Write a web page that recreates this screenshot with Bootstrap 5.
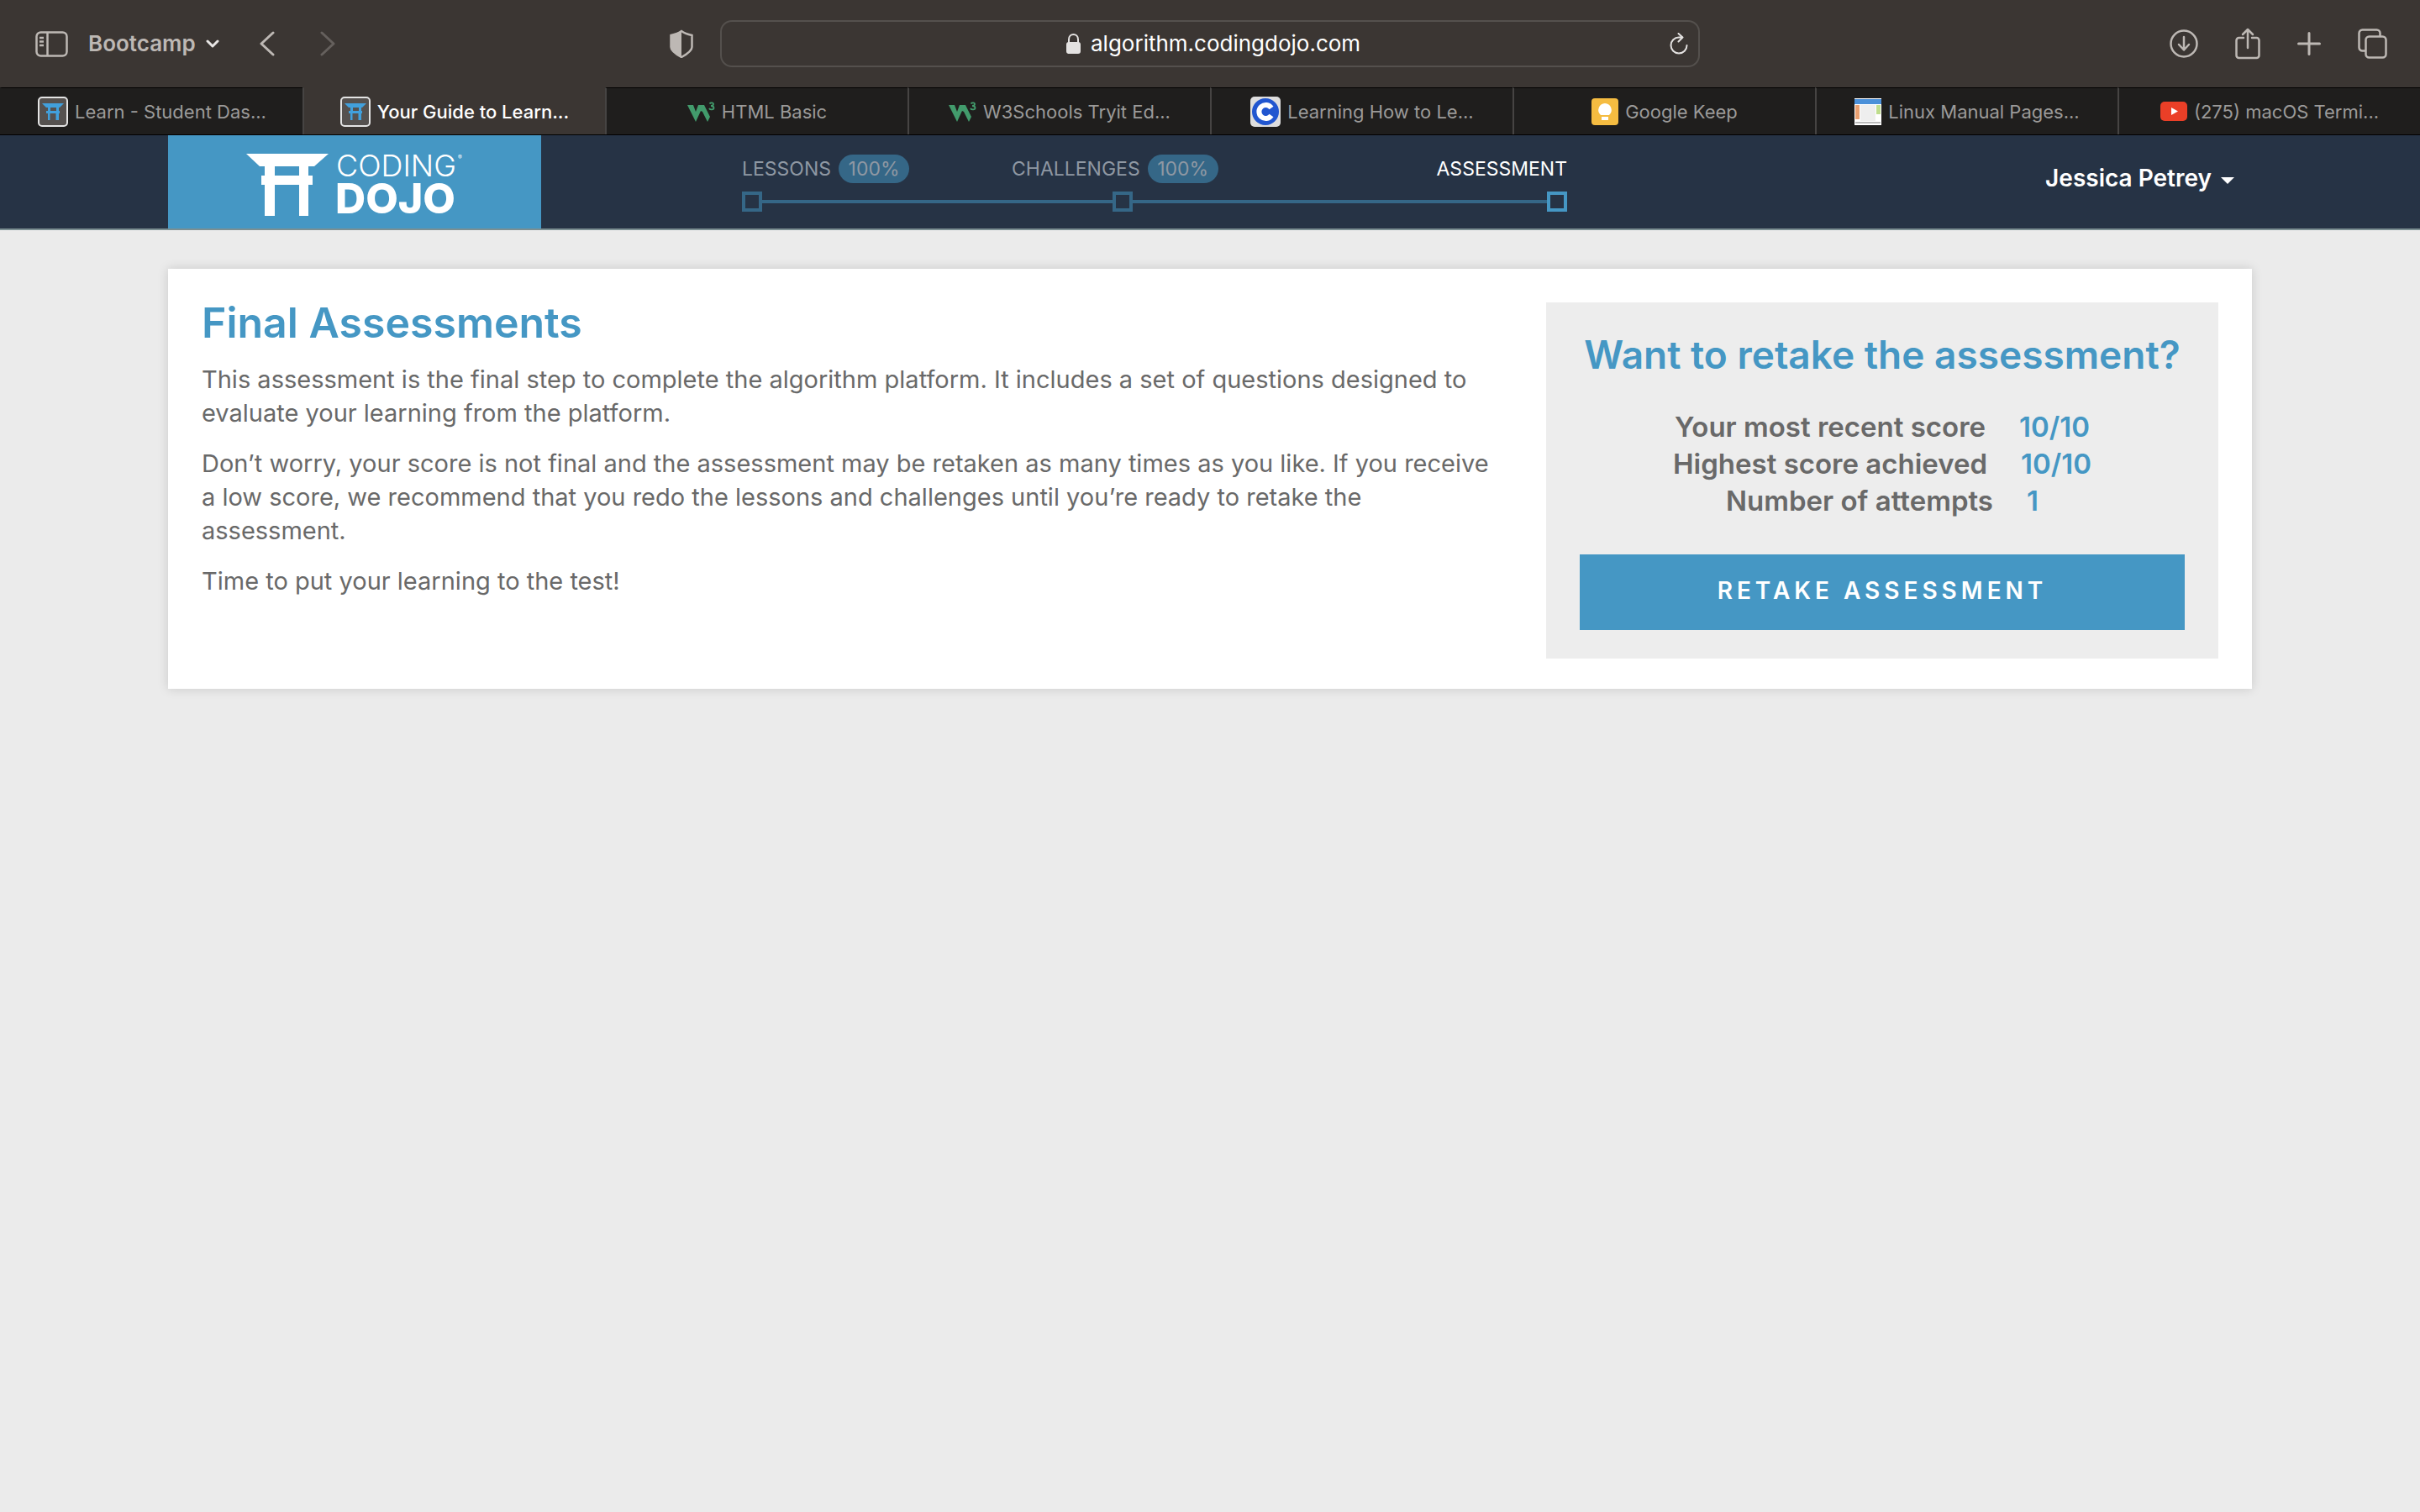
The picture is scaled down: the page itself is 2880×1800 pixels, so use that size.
<!DOCTYPE html>
<html lang="en">
<head>
<meta charset="utf-8">
<meta name="viewport" content="width=device-width, initial-scale=1">
<title>Your Guide to Learning Algorithms</title>
<link rel="stylesheet" href="https://cdn.jsdelivr.net/npm/bootstrap@5.3.0/dist/css/bootstrap.min.css">
<style>
  :root { --brand: #4597c4; --brand-dim: #356787; --navy: #263345; --chrome: #3b3633; --chrome-icon: #bdb8b4; }
  body { background: #ebebeb; color: #696969; font-family: Inter, "Liberation Sans", sans-serif; }
  svg { display: block; flex: none; }

  /* Browser toolbar */
  .toolbar { display: grid; grid-template-columns: 1fr 1166px 1fr; align-items: center; height: 104px; background: var(--chrome); color: var(--chrome-icon); }
  .tool-btn { background: none; border: 0; padding: 0; color: inherit; display: flex; align-items: center; }
  .left-tools { padding-left: 42px; }
  .right-tools { padding-right: 39px; gap: 44px; }
  .group-btn { font-size: 26px; font-weight: 600; line-height: 32px; }
  .address { height: 56px; padding-left: 24px; border: 2px solid #54504d; border-radius: 14px; color: #e4e2e1; }
  .address-side { flex: 1 0 0; }
  .address input { width: 320px; margin-left: 12px; background: none; border: 0; padding: 0; color: #fff; font-size: 26px; line-height: 32px; outline: 0; }

  /* Tab strip */
  .tab-strip { height: 57px; background: #1f1e1d; border-bottom: 1px solid #000; }
  .tab-link { flex: 1 1 0; min-width: 0; border-top: 1px solid #000; border-left: 2px solid #464443; color: #9b9a99; font-size: 22px; line-height: 28px; text-decoration: none; white-space: nowrap; }
  .tab-link:first-child { border-left-color: #1f1e1d; }
  .tab-link.active { background: var(--chrome); border-top-color: var(--chrome); color: #fff; font-weight: 500; }

  /* Site header */
  .site-header { background: var(--navy); border-bottom: 2px solid #7b8f92; }
  .page-width { margin: 0 200px; }
  .brand-tile { width: 444px; height: 111px; background: var(--brand); }
  .brand-tile text { fill: #fff; font-family: Inter, "Liberation Sans", sans-serif; }
  .progress-nav { width: 982px; margin-left: 239px; padding-top: 23px; }
  .step-labels { display: grid; grid-template-columns: 321px 1fr auto; }
  .step-link { color: #8f98a3; font-size: 23px; line-height: 34px; text-decoration: none; gap: 9px; }
  .step-link.active { color: #fff; }
  .step-pill { background: var(--brand-dim); border-radius: 17px; width: 84px; text-align: center; }
  .step-track { padding-top: 10px; }
  .node-box { width: 24px; height: 24px; border: 4px solid var(--brand-dim); flex: none; }
  .node-box.active { border-color: var(--brand); }
  .node-line { height: 4px; background: var(--brand-dim); }
  .user-btn { color: #fff; font-size: 28px; font-weight: 600; line-height: 34px; gap: 11px; padding: 0 21px 10px 0; }
  .user-btn::after { content: ""; border: 8px solid transparent; border-top-color: #fff; border-bottom: 0; margin-top: 6px; }

  /* Content */
  .panel { margin: 46px 0; padding: 40px 40px 36px; background: #fff; box-shadow: 0 0 12px rgba(0, 0, 0, .15); gap: 48px; }
  .panel h1 { color: var(--brand); font-size: 50px; line-height: 48px; font-weight: 600; margin: 0 0 24px; }
  .panel p { font-size: 29px; line-height: 40px; margin: 0 0 20px; }
  .retake { width: 800px; background: #ededed; padding: 40px 40px 34px; text-align: center; }
  .retake h2 { color: var(--brand); font-size: 46px; line-height: 44px; font-weight: 600; margin: 0 0 42px; }
  .score-list { font-size: 33px; line-height: 44px; font-weight: 600; margin: 0 0 42px; }
  .score-list dt { font-weight: inherit; }
  .score-list dd { color: var(--brand); margin: 0; }
  .score-row { gap: 40px; }
  .retake-btn { height: 90px; border: 0; border-radius: 0; background: var(--brand); color: #fff; font-size: 28px; font-weight: 600; letter-spacing: 5px; padding: 0 0 4px; }
</style>
<script src="https://cdn.jsdelivr.net/npm/bootstrap@5.3.0/dist/js/bootstrap.bundle.min.js"></script>
</head>
<body class="min-vh-100">

<svg width="0" height="0" class="position-absolute" aria-hidden="true">
  <symbol id="torii" viewBox="0 0 98 74"><path fill="currentColor" d="M0 0h98L81 15h-7v11h5v11h-5v37H63V37H34v37H22V37h-4V26h4V15h-6zM34 15v11h29V15z"/></symbol>
  <symbol id="fav-dojo" viewBox="0 0 36 36"><rect x="1" y="1" width="34" height="34" rx="4" fill="#55514f" stroke="#e4e4e4" stroke-width="2"/><path fill="#41a0dc" d="M5 8h26l-5 5h-1v4h1v3h-1v8h-3.500v-8h-7v8H12v-8h-2v-3h2v-4h-2zM15 13v4h7v-4z"/></symbol>
  <symbol id="fav-w3" viewBox="0 0 33 24"><path fill="#429b6c" d="M0 4h7l3 8 3-8h7l7 14-3 6-6-12-2-1-6 13z"/><path fill="none" stroke="#429b6c" stroke-width="1.800" d="M26.500 2.500c1-1.500 4.500-1.500 4.500.5 0 1.500-1.500 2-3 2 2 0 3.500.5 3.500 2.500 0 2.500-4.500 2.500-5.500.5"/></symbol>
</svg>

<div class="toolbar">
  <div class="left-tools d-flex align-items-center">
    <button class="tool-btn" type="button" aria-label="Show sidebar">
      <svg width="39" height="31" fill="none" stroke="currentColor" stroke-width="2.500"><rect x="1.500" y="1.500" width="36" height="28" rx="5"/><path d="M14.500 2v27M5 8h5M5 12.500h5M5 17h5"/></svg>
    </button>
    <button class="tool-btn group-btn ms-4" type="button">Bootcamp
      <svg class="ms-2 ps-1" width="20" height="11" viewBox="0 0 16 11" fill="none" stroke="#e8e6e5" stroke-width="3" stroke-linecap="round" stroke-linejoin="round"><path d="m2 2 6 6 6-6"/></svg>
    </button>
    <button class="tool-btn ms-5" type="button" aria-label="Back">
      <svg width="18" height="30" fill="none" stroke="currentColor" stroke-width="3" stroke-linecap="round" stroke-linejoin="round"><path d="M16 2 2 15l14 13"/></svg>
    </button>
    <button class="tool-btn ms-5" type="button" aria-label="Forward">
      <svg width="24" height="30" fill="none" stroke="#65605d" stroke-width="3" stroke-linecap="round" stroke-linejoin="round"><path d="m8 2 14 13L8 28"/></svg>
    </button>
    <button class="tool-btn ms-auto me-4" type="button" aria-label="Privacy report">
      <svg class="me-2" width="28" height="34"><path fill="none" stroke="currentColor" stroke-width="2.500" d="M14 2c4 3 8 4 12.500 5v14c0 5-7 9-12.500 12C8.500 30 1.500 26 1.500 21V7C6 6 10 5 14 2z"/><path fill="currentColor" d="M14 2v31C8.500 30 1.500 26 1.500 21V7C6 6 10 5 14 2z"/></svg>
    </button>
  </div>
  <div class="address d-flex align-items-center">
    <span class="address-side d-flex justify-content-end"><svg width="17" height="24"><rect y="10" width="17" height="14" rx="3" fill="currentColor"/><path fill="none" stroke="currentColor" stroke-width="2" d="M3 11V7c0-8 11-8 11 0v4"/></svg></span>
    <input type="text" value="algorithm.codingdojo.com" aria-label="Address">
    <span class="address-side d-flex justify-content-end">
      <button class="tool-btn me-2 pe-1" type="button" aria-label="Reload">
        <svg width="22" height="27" fill="none" stroke="currentColor" stroke-width="2" stroke-linecap="round" stroke-linejoin="round"><path d="M20.500 15a9.500 9.500 0 1 1-9.500-9.500h4M10.500 1l5 4.500-5 5"/></svg>
      </button>
    </span>
  </div>
  <div class="right-tools d-flex align-items-center justify-content-end">
    <button class="tool-btn" type="button" aria-label="Downloads">
      <svg width="34" height="34" fill="none" stroke="currentColor" stroke-width="2.500" stroke-linecap="round" stroke-linejoin="round"><circle cx="17" cy="17" r="15.500"/><path d="M17 9v15m-6-6 6 6.500 6-6.500"/></svg>
    </button>
    <button class="tool-btn" type="button" aria-label="Share">
      <svg width="30" height="38" fill="none" stroke="currentColor" stroke-width="2.500" stroke-linecap="round" stroke-linejoin="round"><path d="M10 12H4.500A3 3 0 0 0 1.500 15v18a3 3 0 0 0 3 3h21a3 3 0 0 0 3-3V15a3 3 0 0 0-3-3H20M15 24V2M9 8l6-6 6 6"/></svg>
    </button>
    <button class="tool-btn" type="button" aria-label="New tab">
      <svg width="28" height="28" fill="none" stroke="currentColor" stroke-width="3" stroke-linecap="round"><path d="M14 1.500v25M1.500 14h25"/></svg>
    </button>
    <button class="tool-btn" type="button" aria-label="Tab overview">
      <svg width="35" height="36" fill="none" stroke="currentColor" stroke-width="2.500"><rect x="9.500" y="9.500" width="24" height="25" rx="4"/><path d="M9 26.500H5.500a4 4 0 0 1-4-4v-17a4 4 0 0 1 4-4h17a4 4 0 0 1 4 4V9"/></svg>
    </button>
  </div>
</div>

<nav class="tab-strip d-flex" aria-label="Tabs">
  <a href="#" class="tab-link d-flex align-items-center justify-content-center gap-2"><svg width="36" height="36"><use href="#fav-dojo"/></svg>Learn - Student Das...</a>
  <a href="#" class="tab-link active d-flex align-items-center justify-content-center gap-2"><svg width="36" height="36"><use href="#fav-dojo"/></svg>Your Guide to Learn...</a>
  <a href="#" class="tab-link d-flex align-items-center justify-content-center gap-2"><svg width="33" height="24"><use href="#fav-w3"/></svg>HTML Basic</a>
  <a href="#" class="tab-link d-flex align-items-center justify-content-center gap-2"><svg width="33" height="24"><use href="#fav-w3"/></svg>W3Schools Tryit Ed...</a>
  <a href="#" class="tab-link d-flex align-items-center justify-content-center gap-2"><svg width="36" height="36"><rect width="36" height="36" rx="5" fill="#dedede"/><circle cx="18" cy="18" r="16" fill="#2156d0"/><path fill="none" stroke="#fff" stroke-width="6" d="M25 13.500a8 8 0 1 0 0 9"/></svg>Learning How to Le...</a>
  <a href="#" class="tab-link d-flex align-items-center justify-content-center gap-2"><svg width="32" height="32"><rect width="32" height="32" rx="4" fill="#f5bc41"/><path fill="#fff" d="M16 6a8 8 0 0 0-5 14h10A8 8 0 0 0 16 6zM12 22h8v4h-8z"/></svg>Google Keep</a>
  <a href="#" class="tab-link d-flex align-items-center justify-content-center gap-2"><svg width="32" height="32"><path fill="#fff" d="M0 0h32v32H0z"/><path fill="#4a90d9" d="M0 1h32v6H0z"/><path fill="#e9a071" d="M1 8h5v17H1z"/><path fill="#eee" d="M7 8h18v19H7z"/><path fill="#bfdd8e" d="M26 8h5v11h-5z"/><path fill="#bbb" d="M1 28h30v2H1z"/></svg>Linux Manual Pages...</a>
  <a href="#" class="tab-link d-flex align-items-center justify-content-center gap-2"><svg width="32" height="23"><rect width="32" height="23" rx="5" fill="#eb3f27"/><path fill="#fff" d="m13 7 8 4.500-8 4.500z"/></svg>(275) macOS Termi...</a>
</nav>

<header class="site-header">
  <div class="page-width d-flex">
    <a href="#" class="brand-tile d-flex align-items-center justify-content-center" aria-label="Coding Dojo">
      <svg width="260" height="111" viewBox="0 0 260 111">
        <g color="#fff"><use href="#torii" x="1" y="22" width="98" height="74"/></g>
        <text x="108" y="49" font-size="36" font-weight="300">CODING</text>
        <text x="107" y="93" font-size="50" font-weight="800">DOJO</text>
        <text x="253" y="29" font-size="7">®</text>
      </svg>
    </a>
    <nav class="progress-nav" aria-label="Course progress">
      <div class="step-labels">
        <a href="#" class="step-link d-flex">LESSONS <span class="step-pill">100%</span></a>
        <a href="#" class="step-link d-flex">CHALLENGES <span class="step-pill">100%</span></a>
        <a href="#" class="step-link active d-flex">ASSESSMENT</a>
      </div>
      <div class="step-track d-flex align-items-center">
        <span class="node-box"></span><span class="node-line" style="flex:417"></span>
        <span class="node-box"></span><span class="node-line" style="flex:493"></span>
        <span class="node-box active"></span>
      </div>
    </nav>
    <button class="tool-btn user-btn ms-auto" type="button">Jessica Petrey</button>
  </div>
</header>

<main class="page-width">
  <section class="panel d-flex">
    <div class="flex-fill">
      <h1>Final Assessments</h1>
      <p>This assessment is the final step to complete the algorithm platform. It includes a set of questions designed to evaluate your learning from the platform.</p>
      <p>Don’t worry, your score is not final and the assessment may be retaken as many times as you like. If you receive a low score, we recommend that you redo the lessons and challenges until you’re ready to retake the assessment.</p>
      <p>Time to put your learning to the test!</p>
    </div>
    <aside class="retake flex-shrink-0">
      <h2>Want to retake the assessment?</h2>
      <dl class="score-list">
        <div class="score-row d-flex justify-content-center"><dt>Your most recent score</dt><dd>10/10</dd></div>
        <div class="score-row d-flex justify-content-center"><dt>Highest score achieved</dt><dd>10/10</dd></div>
        <div class="score-row d-flex justify-content-center"><dt>Number of attempts</dt><dd>1</dd></div>
      </dl>
      <button class="retake-btn btn w-100" type="button">RETAKE ASSESSMENT</button>
    </aside>
  </section>
</main>
</body>
</html>
